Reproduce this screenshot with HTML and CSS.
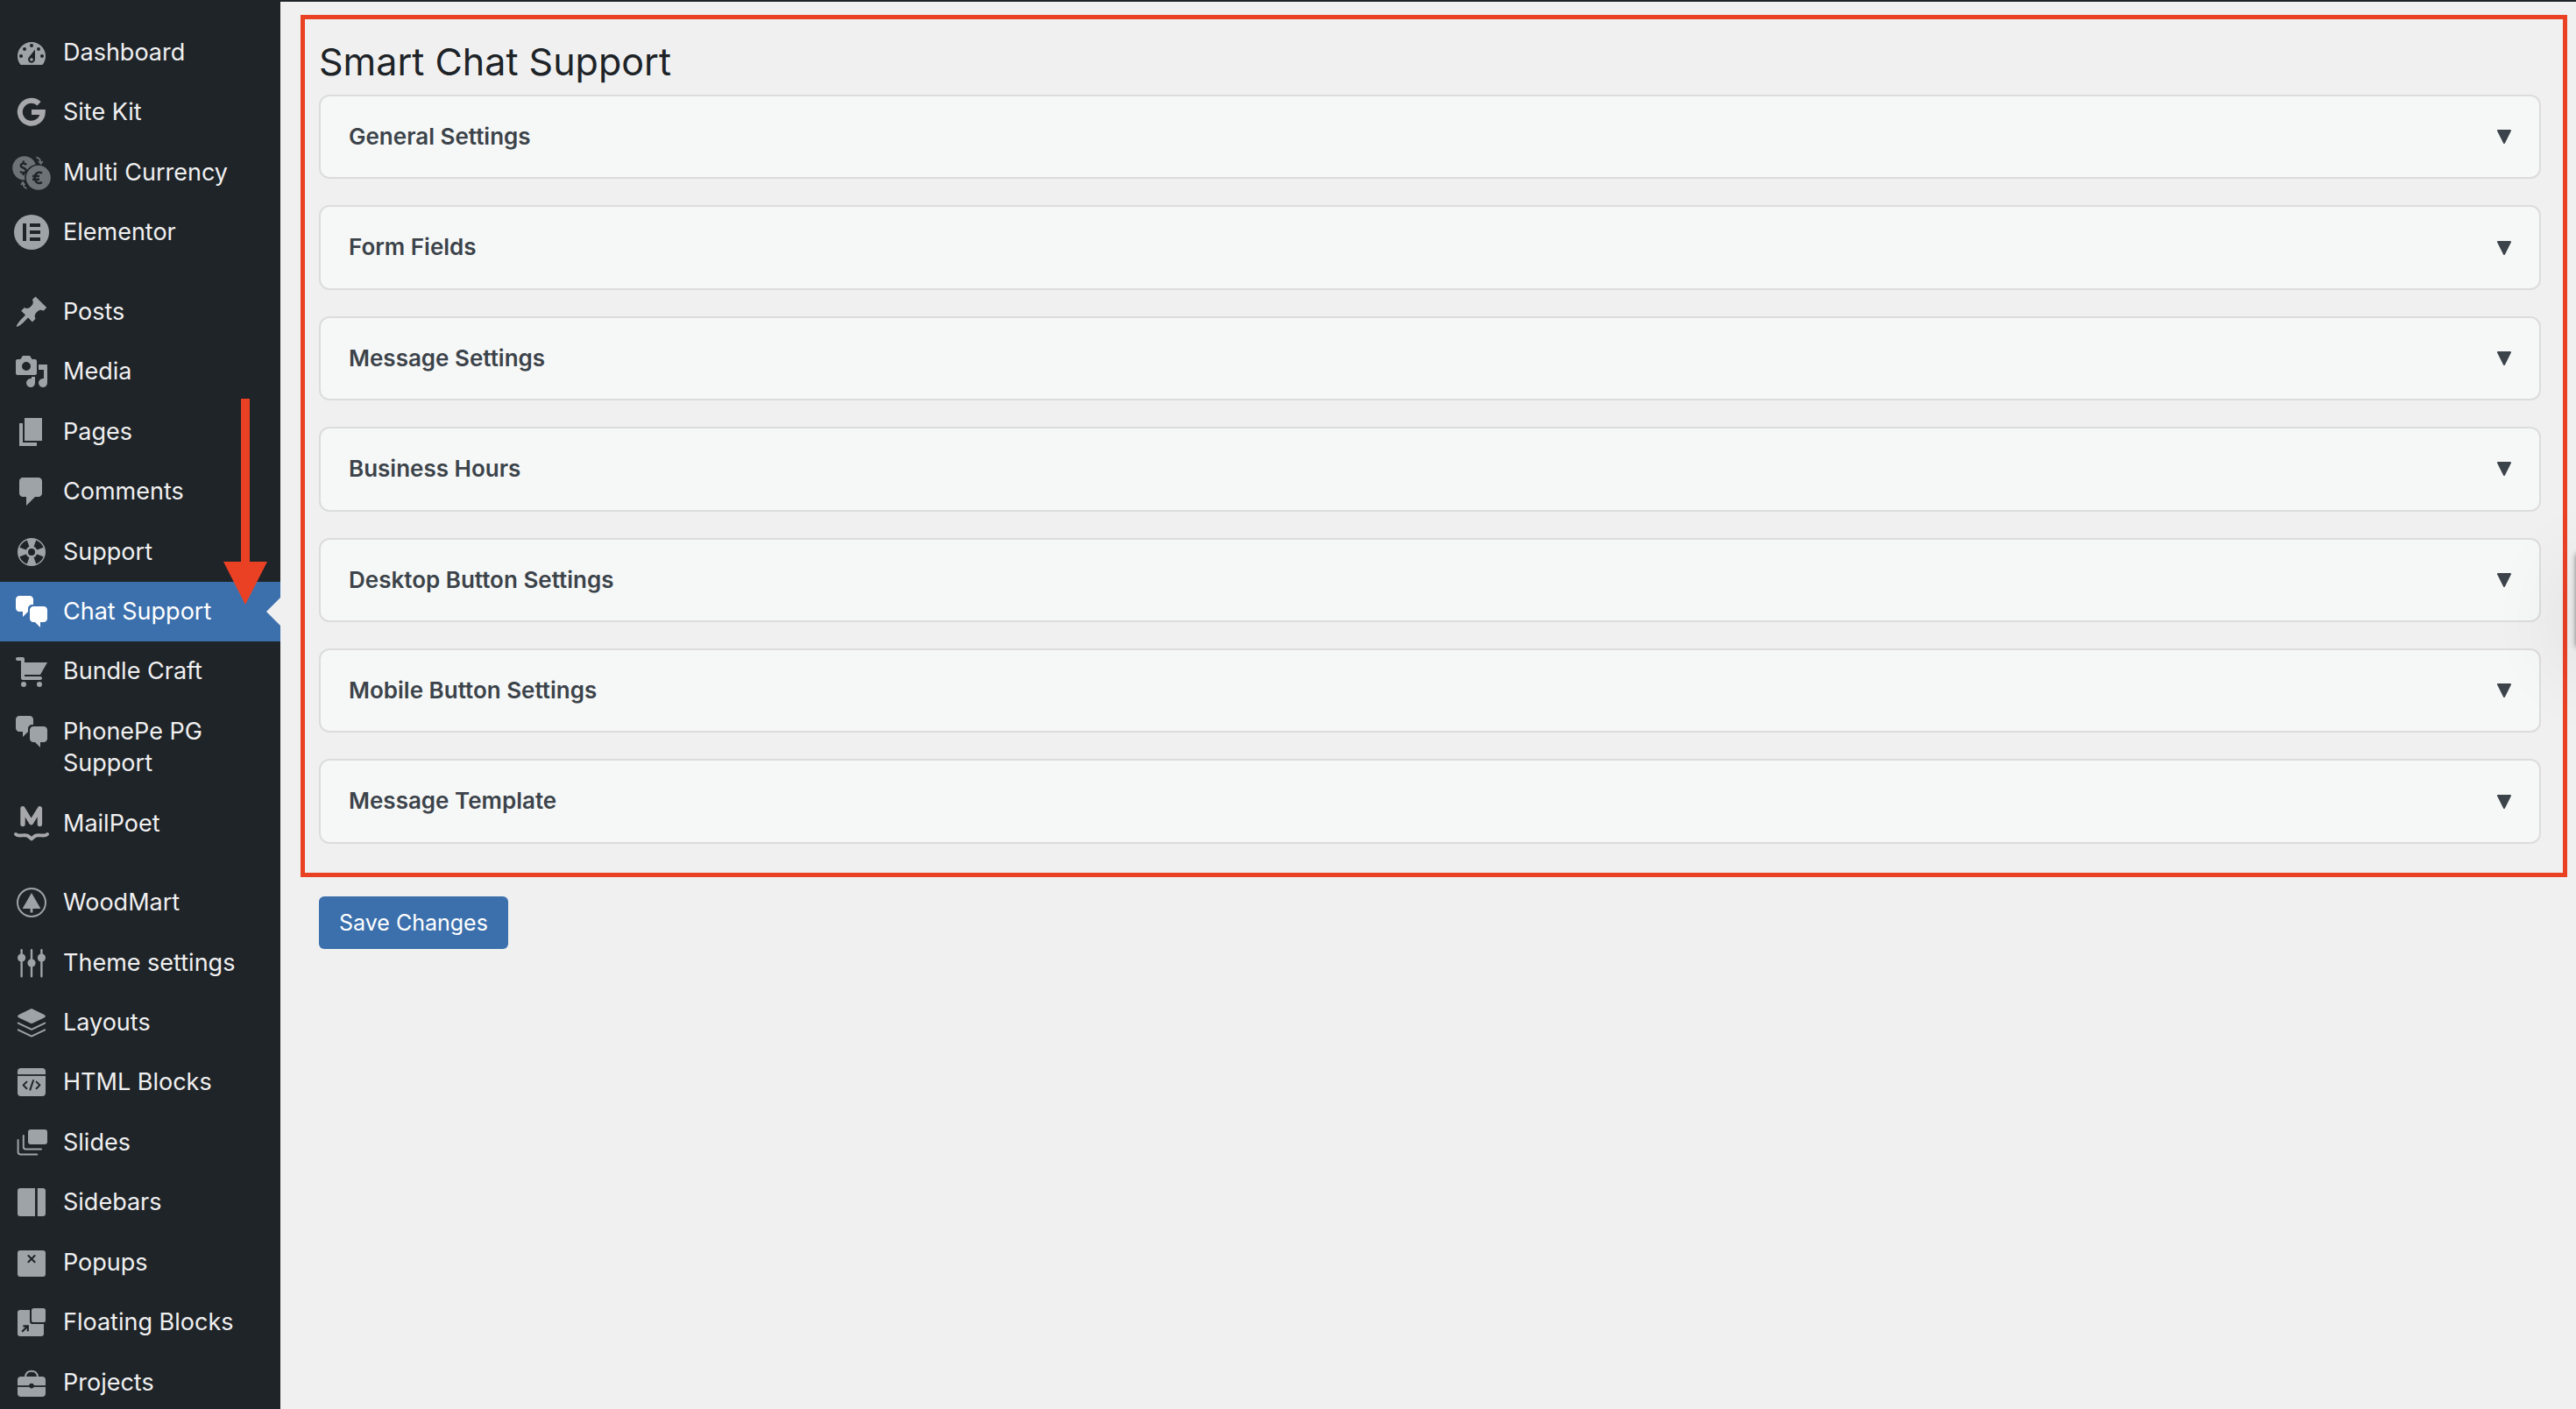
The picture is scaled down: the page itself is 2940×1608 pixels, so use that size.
FILE: index.html
```html
<!DOCTYPE html>
<html lang="en">
<head>
    <meta charset="UTF-8">
    <meta name="viewport" content="width=device-width, initial-scale=1.0">
    <title>Smart Chat Support</title>
    <link rel="stylesheet" href="styles.css">
</head>
<body>
    <div class="admin-bar"></div>
    <div class="admin">
        <nav class="menu" aria-label="Main menu">
            <ul>
                <li><a href="#">
                    <svg class="icon" viewBox="0 0 20 20"><path d="M3.76 17h12.48A7.96 7.96 0 0 0 18 12a8 8 0 1 0-16 0c0 1.9.66 3.64 1.76 5z"/><g class="cut"><circle cx="10" cy="6" r="1"/><circle cx="6" cy="8" r="1"/><circle cx="14" cy="8" r="1"/><circle cx="4" cy="12" r="1"/><circle cx="16" cy="12" r="1"/><path d="M12 8.2v5.6a2 2 0 1 1-3.8-.8z"/></g><circle cx="10" cy="14" r=".9"/></svg>
                    <span>Dashboard</span></a></li>
                <li><a href="#">
                    <svg class="icon brand" viewBox="0 0 20 20"><path class="line" stroke-width="3" d="M14.3 5.1A6.5 6.5 0 1 0 16.4 10H10"/></svg>
                    <span>Site Kit</span></a></li>
                <li><a href="#">
                    <svg class="icon dim" viewBox="0 0 20 20"><circle cx="5.9" cy="7.4" r="6.8"/><circle class="cut" cx="13.9" cy="12.9" r="7.8"/><circle cx="13.9" cy="12.9" r="7"/><path class="cut-line" stroke-width="1.2" d="M7 5.6C6.6 4.6 4 4.4 3.9 6c0 1.7 3 1 3 2.9 0 1.7-2.8 1.5-3.3.4M5.400 3.300v1.300M5.400 10.200v1.300"/><path class="cut-line" stroke-width="1.200" d="M16 10.300c-2.200-1.300-4.200.2-4.200 2.600s2 3.900 4.200 2.600M10.500 12h4M10.500 13.900h4"/><path class="line" stroke-width=".8" d="M12.700 1.300c1.600.3 2.500 1.400 2.600 3.300M14 3.500l1.300 1.500 1.100-1.500M7.300 19c-1.500-.4-2.200-1.500-2.300-3.300M4 17l1-1.600L6.200 17"/></svg>
                    <span>Multi Currency</span></a></li>
                <li><a href="#">
                    <svg class="icon" viewBox="0 0 20 20"><circle cx="10" cy="10" r="10"/><path class="cut" d="M5 5h2v10H5zM9 5h6v2H9zM9 9h6v2H9zM9 13h6v2H9z"/></svg>
                    <span>Elementor</span></a></li>
                <li class="separator"></li>
                <li><a href="#">
                    <svg class="icon" viewBox="0 0 20 20"><path d="M10.440 3.020l1.820-1.820 6.360 6.350-1.830 1.820c-1.050-.68-2.480-.57-3.410.36l-.75.750c-.92.930-1.040 2.350-.35 3.410l-1.830 1.820-2.410-2.410-2.800 2.790c-.42.420-3.380 2.710-3.800 2.290s1.860-3.390 2.280-3.810l2.790-2.790L4.100 9.360l1.830-1.820c1.050.690 2.480.570 3.400-.36l.75-.75c.930-.920 1.050-2.350.360-3.410z"/></svg>
                    <span>Posts</span></a></li>
                <li><a href="#">
                    <svg class="icon" viewBox="0 0 20 20"><path fill-rule="evenodd" d="M13 11V4c0-.55-.45-1-1-1h-1.670L9 1H5L3.670 3H2c-.55 0-1 .45-1 1v7c0 .55.450 1 1 1h10c.55 0 1-.45 1-1zM7 4.500a2.500 2.500 0 1 1 0 5 2.500 2.500 0 0 1 0-5z"/><path d="M14 6h5v10.500a2.500 2.500 0 1 1-2-2.450V9h-3zM10 14.050V13h2v3.500a2.500 2.500 0 1 1-2-2.450z"/></svg>
                    <span>Media</span></a></li>
                <li><a href="#">
                    <svg class="icon" viewBox="0 0 20 20"><path d="M6 15V2h10v13H6zm-1 1h8v2H3V5h2v11z"/></svg>
                    <span>Pages</span></a></li>
                <li><a href="#">
                    <svg class="icon" viewBox="0 0 20 20"><path d="M5 2h9c1.100 0 2 .9 2 2v7c0 1.100-.9 2-2 2h-2l-5 5v-5H5c-1.100 0-2-.9-2-2V4c0-1.100.9-2 2-2z"/></svg>
                    <span>Comments</span></a></li>
                <li><a href="#">
                    <svg class="icon" viewBox="0 0 20 20"><circle cx="10" cy="10" r="8"/><g class="cut"><path id="gap" d="M12.600 3.200a7.300 7.300 0 0 1 4.200 4.200l-3.700 1.300a3.400 3.400 0 0 0-1.800-1.800z"/><use href="#gap" transform="rotate(90 10 10)"/><use href="#gap" transform="rotate(180 10 10)"/><use href="#gap" transform="rotate(270 10 10)"/><circle cx="10" cy="10" r="2"/></g></svg>
                    <span>Support</span></a></li>
                <li class="current"><a href="#" aria-current="page">
                    <svg class="icon" viewBox="0 0 20 20"><path id="chat" d="M11 6h-.82C9.070 6 8 7.200 8 8.160V10l-3 3v-3H3c-1.100 0-2-.9-2-2V3c0-1.100.9-2 2-2h6c1.100 0 2 .9 2 2v3zm0 1h6c1.100 0 2 .9 2 2v5c0 1.100-.9 2-2 2h-2v3l-3-3h-1c-1.100 0-2-.9-2-2V9c0-1.100.9-2 2-2z"/></svg>
                    <span>Chat Support</span></a></li>
                <li><a href="#">
                    <svg class="icon" viewBox="0 0 20 20"><path d="M6 13h9c.55 0 1 .45 1 1s-.45 1-1 1H5c-.55 0-1-.45-1-1V4H2c-.55 0-1-.45-1-1s.45-1 1-1h3c.55 0 1 .45 1 1v2h13l-4 7H6v1zm-.5 3a1.500 1.500 0 1 1 0 3 1.500 1.500 0 0 1 0-3zm9 0a1.500 1.500 0 1 1 0 3 1.500 1.500 0 0 1 0-3z"/></svg>
                    <span>Bundle Craft</span></a></li>
                <li><a href="#">
                    <svg class="icon" viewBox="0 0 20 20"><use href="#chat"/></svg>
                    <span>PhonePe PG Support</span></a></li>
                <li><a href="#">
                    <svg class="icon brand" viewBox="0 0 20 20"><path class="line" stroke-width="2.700" stroke-linecap="round" stroke-linejoin="round" d="M5 10.300V1.400L9.800 9.300l4.900-7.900v8.900"/><path class="line" stroke-width="2" stroke-linecap="round" stroke-linejoin="round" d="M1 16c1.500 1.700 4.500 0 6.600.8 1 .4 1.500 1.200 2.400 1.900.9-.7 1.400-1.500 2.400-1.900 2.100-.8 5.100.9 6.600-.8"/></svg>
                    <span>MailPoet</span></a></li>
                <li class="separator"></li>
                <li><a href="#">
                    <svg class="icon" viewBox="0 0 20 20"><circle class="line" cx="10" cy="10" r="8"/><path d="M10 4.500l5.200 9h-4.500v2.200H9.300v-2.200H4.800z"/></svg>
                    <span>WoodMart</span></a></li>
                <li><a href="#">
                    <svg class="icon" viewBox="0 0 20 20"><path class="line" stroke-width="1.200" stroke-linecap="round" d="M4.300 2.600v15M10 2.600v15M15.700 2.600v15"/><circle cx="4.300" cy="7" r="2.300"/><circle cx="10" cy="10" r="2.300"/><circle cx="15.700" cy="7" r="2.300"/></svg>
                    <span>Theme settings</span></a></li>
                <li><a href="#">
                    <svg class="icon" viewBox="0 0 20 20"><path d="M9.400 2.200q.6-.3 1.200 0l7 3.300q.8.500.8.800 0 .5-.8.900l-7 3.200q-.6.300-1.200 0l-7-3.200q-.8-.4-.8-.9 0-.3.800-.8z" transform="translate(.5) scale(.95 1)"/><path class="line" stroke-width="1" stroke-linecap="round" stroke-linejoin="round" d="M2.400 10.300l7.600 3.600 7.600-3.600M2.400 14.200l7.600 3.600 7.600-3.600"/></svg>
                    <span>Layouts</span></a></li>
                <li><a href="#">
                    <svg class="icon" viewBox="0 0 20 20"><rect x="2" y="2" width="16" height="16" rx="2"/><path class="cut-line" stroke-width=".9" d="M2 6h16"/><path class="cut-line" stroke-width="1" stroke-linecap="round" stroke-linejoin="round" d="M7.200 9.800l-1.900 1.900 1.900 1.900M12.800 9.800l1.900 1.900-1.900 1.900M11 9l-1.800 5.300"/></svg>
                    <span>HTML Blocks</span></a></li>
                <li><a href="#">
                    <svg class="icon" viewBox="0 0 20 20"><rect x="8" y="2.500" width="11" height="8.500" rx="1.500"/><path class="line" stroke-linecap="round" d="M5.400 6v6.500q0 1.200 1.200 1.200H15.500M2.300 8.500v6.800Q2.300 16.700 3.500 16.700h9.600"/></svg>
                    <span>Slides</span></a></li>
                <li><a href="#">
                    <svg class="icon" viewBox="0 0 20 20"><path d="M3.500 2H12v16H3.500A1.500 1.500 0 0 1 2 16.500v-13A1.500 1.500 0 0 1 3.500 2zM13.400 2h3.100A1.500 1.500 0 0 1 18 3.500v13a1.500 1.500 0 0 1-1.500 1.500h-3.100z"/></svg>
                    <span>Sidebars</span></a></li>
                <li><a href="#">
                    <svg class="icon" viewBox="0 0 20 20"><rect x="2" y="3" width="16" height="15" rx="1.500"/><path class="cut-line" stroke-linecap="round" d="M8.200 6l3.600 3.600M11.800 6L8.200 9.600"/></svg>
                    <span>Popups</span></a></li>
                <li><a href="#">
                    <svg class="icon" viewBox="0 0 20 20"><path d="M3.500 3H9v6.200Q9 11 10.800 11H17v5.500a1.500 1.500 0 0 1-1.500 1.500h-12A1.500 1.500 0 0 1 2 16.500v-12A1.500 1.500 0 0 1 3.500 3z"/><rect x="10" y="2" width="8" height="8" rx="1.300"/><path class="cut-line" stroke-width="1.100" d="M4.600 15.400l3-3M5.200 12.200h2.700v2.900"/></svg>
                    <span>Floating Blocks</span></a></li>
                <li><a href="#">
                    <svg class="icon" viewBox="0 0 20 20"><path class="line" d="M6.500 6.500C6.800 4.300 8.300 3.400 10 3.400s3.200.9 3.500 3.100"/><rect x="2" y="6.500" width="16" height="11.500" rx="2"/><path class="cut-line" stroke-width=".9" d="M2 12h16"/><circle class="cut" cx="10" cy="11.800" r="1.400"/></svg>
                    <span>Projects</span></a></li>
            </ul>
            <svg class="pointer" viewBox="0 0 50 235"><path d="M20 0h10v186h20l-25 49L0 186h20z"/></svg>
        </nav>

        <main class="content">
            <form>
                <div class="settings">
                    <h1>Smart Chat Support</h1>
                    <details>
                        <summary>General Settings<svg class="toggle" viewBox="0 0 16 16"><path d="M1 1h14L8 15z"/></svg></summary>
                    </details>
                    <details>
                        <summary>Form Fields<svg class="toggle" viewBox="0 0 16 16"><path d="M1 1h14L8 15z"/></svg></summary>
                    </details>
                    <details>
                        <summary>Message Settings<svg class="toggle" viewBox="0 0 16 16"><path d="M1 1h14L8 15z"/></svg></summary>
                    </details>
                    <details>
                        <summary>Business Hours<svg class="toggle" viewBox="0 0 16 16"><path d="M1 1h14L8 15z"/></svg></summary>
                    </details>
                    <details>
                        <summary>Desktop Button Settings<svg class="toggle" viewBox="0 0 16 16"><path d="M1 1h14L8 15z"/></svg></summary>
                    </details>
                    <details>
                        <summary>Mobile Button Settings<svg class="toggle" viewBox="0 0 16 16"><path d="M1 1h14L8 15z"/></svg></summary>
                    </details>
                    <details>
                        <summary>Message Template<svg class="toggle" viewBox="0 0 16 16"><path d="M1 1h14L8 15z"/></svg></summary>
                    </details>
                </div>
                <button type="submit" class="save">Save Changes</button>
            </form>
        </main>
    </div>
    <div class="side-panel"></div>
</body>
</html>
```
FILE: styles.css
```css
* {
    box-sizing: border-box;
}

html {
    height: 100%;
    overflow: hidden;
}

body {
    display: flex;
    flex-direction: column;
    height: 100%;
    margin: 0;
    overflow: hidden;
    background: #f0f0f0;
    color: #3c434a;
    font-family: Inter, "Liberation Sans", sans-serif;
    font-size: 26px;
    line-height: 1.4;
}

.admin-bar {
    flex: none;
    height: 2px;
    background: #1f2428;
}

.admin {
    display: flex;
    flex: 1;
    min-height: 0;
}

/* left menu */
.menu {
    position: relative;
    flex: none;
    width: 320px;
    padding-top: 24px;
    background: #1f2428;
    overflow: hidden;
}

.menu ul {
    margin: 0;
    padding: 0;
    list-style: none;
}

.menu a {
    display: flex;
    align-items: flex-start;
    gap: 16px;
    padding: 16px;
    color: #f0f0f1;
    font-size: 27px;
    line-height: 1.35;
    text-decoration: none;
}

.menu .separator {
    height: 22px;
}

.menu .current {
    position: relative;
    background: #3c70ad;
}

.menu .current a {
    color: #fff;
}

.menu .current::after {
    content: "";
    position: absolute;
    top: 50%;
    right: 0;
    margin-top: -16px;
    border: 16px solid transparent;
    border-right-color: #f0f0f0;
    border-left: 0;
}

.icon {
    flex: none;
    width: 40px;
    height: 40px;
    margin: -2px 0;
    overflow: visible;
    fill: #9ea3a8;
    stroke: none;
    color: #9ea3a8;
}

.current .icon {
    fill: #fff;
}

.icon.brand {
    color: #a7a8ac;
}

.icon.dim {
    fill: #6d7276;
    color: #6d7276;
}

.icon .line {
    fill: none;
    stroke: currentColor;
}

.icon .cut {
    fill: #1f2428;
}

.icon .cut-line {
    fill: none;
    stroke: #1f2428;
}

.pointer {
    position: absolute;
    top: 453px;
    right: 15px;
    width: 50px;
    height: 235px;
    fill: #ea4125;
}

/* settings page */
.content {
    flex: 1;
    padding: 15px 10px 0 23px;
}

.settings {
    padding: 18px 25px 33px 16px;
    border: 5px solid #ea4125;
}

h1 {
    margin: 0;
    padding-bottom: 8px;
    color: #1d2327;
    font-size: 43px;
    font-weight: 400;
    line-height: 60px;
}

details {
    border: 2px solid #dcdcdc;
    border-radius: 12px;
    background: #f6f8f7;
}

details + details {
    margin-top: 30px;
}

summary {
    display: flex;
    align-items: center;
    justify-content: space-between;
    padding: 28px 32px;
    font-weight: 600;
    list-style: none;
    cursor: pointer;
}

.toggle {
    width: 16px;
    height: 16px;
    fill: #3c434a;
    stroke: #3c434a;
    stroke-width: 2;
    stroke-linejoin: round;
}

.save {
    margin: 22px 0 0 21px;
    padding: 0 23px;
    border: 0;
    border-radius: 6px;
    background: #3c70ad;
    color: #fff;
    font: inherit;
    font-size: 25px;
    line-height: 60px;
    cursor: pointer;
}

.side-panel {
    position: fixed;
    top: 632px;
    right: -60px;
    width: 60px;
    height: 106px;
    box-shadow: 0 0 6px rgba(0, 0, 0, 0.5), 0 20px 100px rgba(0, 0, 0, 0.12);
}
```
